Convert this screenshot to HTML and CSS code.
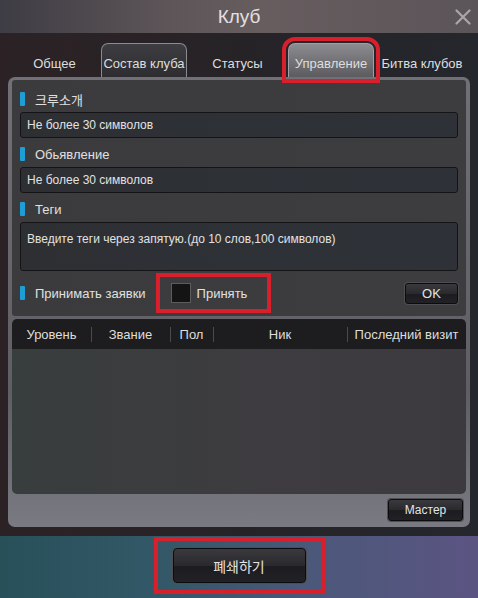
FILE: index.html
```html
<!DOCTYPE html>
<html lang="ru">
<head>
    <meta charset="UTF-8">
    <meta name="viewport" content="width=device-width, initial-scale=1.0">
    <title>Клуб</title>
    <link rel="stylesheet" href="styles.css">
</head>
<body>
    <div class="window">
        <!-- title -->
        <div class="titlebar">
            <span></span>
            <span class="title">Клуб</span>
            <span class="close">
                <svg width="16" height="16" viewBox="0 0 16 16"><path d="M1.5 1.5 L14.5 14.5 M14.5 1.5 L1.5 14.5" stroke="#a9a6aa" stroke-width="2.2" stroke-linecap="round"/></svg>
            </span>
        </div>

        <div class="content">
            <!-- tabs -->
            <div class="tabs">
                <div class="tab w1">Общее</div>
                <div class="tab w2 boxed">Состав клуба</div>
                <div class="tab w3">Статусы</div>
                <div class="tab w2 boxed active">Управление</div>
                <div class="tab w4">Битва клубов</div>
            </div>

            <div class="panel">
                <div class="settings">
                    <div class="label"><i class="bar"></i>크루소개</div>
                    <div class="field">Не более 30 символов</div>

                    <div class="label gap"><i class="bar"></i>Обьявление</div>
                    <div class="field">Не более 30 символов</div>

                    <div class="label gap"><i class="bar"></i>Теги</div>
                    <div class="field area">Введите теги через запятую.(до 10 слов,100 символов)</div>

                    <div class="accept">
                        <div class="label"><i class="bar"></i>Принимать заявки</div>
                        <div class="mark">
                            <span class="check"></span>
                            <span>Принять</span>
                        </div>
                        <button class="btn ok">OK</button>
                    </div>
                </div>

                <!-- members -->
                <div class="members">
                    <div class="head">
                        <div class="col">Уровень</div>
                        <div class="col sep">Звание</div>
                        <div class="col sep">Пол</div>
                        <div class="col sep">Ник</div>
                        <div class="col sep">Последний визит</div>
                    </div>
                    <div class="rows"></div>
                </div>

                <div class="panelfoot">
                    <button class="btn master">Мастер</button>
                </div>
            </div>
        </div>

        <div class="bottom">
            <div class="mark big">
                <button class="btn disband">폐쇄하기</button>
            </div>
        </div>
    </div>
</body>
</html>
```

FILE: styles.css
```css
*
{
    box-sizing: border-box;
}
body
{
    margin: 0;
    background: #1c1a1e;
    font-family: "Liberation Sans", "Noto Sans CJK KR", sans-serif;
    font-size: 13px;
    color: #dcdcdc;
}
.window
{
    width: 478px;
    height: 598px;
    display: flex;
    flex-direction: column;
    overflow: hidden;
}
.titlebar
{
    height: 33px;
    flex: none;
    display: grid;
    grid-template-columns: 1fr auto 1fr;
    align-items: center;
    background: linear-gradient(90deg, #3e3c44, #5d5558 35%, #675d5f 55%, #5b5458);
}
.title
{
    font-size: 19px;
    color: #e2e0e0;
}
.close
{
    justify-self: end;
    display: flex;
    padding-right: 7px;
}
.content
{
    flex: 1;
    padding: 10px 8px 9px;
    background: linear-gradient(90deg, #2c2225, #262327 50%, #24272d);
    display: flex;
    flex-direction: column;
}
.tabs
{
    display: flex;
    height: 34px;
    flex: none;
}
.tab
{
    display: flex;
    align-items: center;
    justify-content: center;
    padding-top: 6px;
    color: #dedede;
    white-space: nowrap;
}
.w1{width: 93px;}
.w2{width: 86px;}
.w3{width: 101px;}
.w4{width: 96px;}
.boxed
{
    border: 1px solid #8c8c90;
    border-bottom: none;
    border-radius: 7px 7px 0 0;
    background: linear-gradient(#3e3e42, #2d2d31);
}
.active
{
    background: linear-gradient(#8c8c90, #5c5c60);
    border-color: #a0a0a4;
    outline: 4px solid #d8202c;
    outline-offset: 2px;
    position: relative;
    z-index: 2;
}
.panel
{
    flex: 1;
    border-radius: 7px;
    padding: 3px 4px 6px;
    background: linear-gradient(#707076, #5e5e64 70%, #7a7a82);
    display: flex;
    flex-direction: column;
}
.settings
{
    background: linear-gradient(90deg, #3b3b3d, #3d3d40);
    border-radius: 3px;
    padding: 8px 8px 3px;
}
.label
{
    height: 22px;
    display: flex;
    align-items: center;
    gap: 10px;
    color: #e0e0e0;
    white-space: nowrap;
}
.label.gap
{
    margin-top: 5px;
}
.bar
{
    width: 5px;
    height: 14px;
    background: #1d9fd6;
    border-radius: 1px;
}
.field
{
    margin-top: 2px;
    height: 26px;
    padding: 0 6px;
    display: flex;
    align-items: center;
    font-size: 12px;
    color: #e2e2e2;
    background: linear-gradient(90deg, #2d2f33, #2e3238);
    border: 1px solid #141416;
    border-radius: 3px;
}
.area
{
    height: 49px;
    align-items: flex-start;
    padding-top: 9px;
}
.accept
{
    margin-top: 2px;
    height: 40px;
    display: flex;
    align-items: center;
}
.mark
{
    border: 4px solid #d8202c;
}
.accept .mark
{
    margin-left: 10px;
    width: 115px;
    height: 40px;
    display: flex;
    align-items: center;
    gap: 6px;
    padding-left: 11px;
    color: #e0e0e0;
}
.check
{
    width: 20px;
    height: 20px;
    background: #141414;
    border: 1px solid #5c5c5c;
}
.btn
{
    font-family: inherit;
    color: #e4e4e4;
    border: 1px solid #0c0c0e;
    border-radius: 3px;
    background: linear-gradient(#3a3a3e, #2a2a2e 50%, #1c1c20 51%, #222226);
    box-shadow: 0 0 0 1px #4e4e52;
    padding: 0;
    cursor: pointer;
}
.ok
{
    margin-left: auto;
    width: 53px;
    height: 21px;
    font-size: 13px;
}
.members
{
    margin-top: 3px;
    height: 175px;
    border-radius: 5px;
    overflow: hidden;
    display: flex;
    flex-direction: column;
}
.head
{
    height: 30px;
    flex: none;
    display: grid;
    grid-template-columns: 79px 79px 43px 134px 1fr;
    background: #1d1d1f;
}
.col
{
    display: flex;
    align-items: center;
    justify-content: center;
    white-space: nowrap;
    color: #dedede;
}
.sep
{
    background: linear-gradient(#4a4a4c, #4a4a4c) left center / 1px 15px no-repeat;
}
.rows
{
    flex: 1;
    background: linear-gradient(90deg, #383d3d, #3d3c3f 50%, #3d3a3f);
}
.panelfoot
{
    display: flex;
    justify-content: flex-end;
    padding: 5px 3px 0 0;
}
.master
{
    width: 75px;
    height: 22px;
    font-size: 12px;
}
.bottom
{
    height: 62px;
    flex: none;
    display: flex;
    justify-content: center;
    padding-top: 1px;
    background: linear-gradient(90deg, #275059, #345868 35%, #4b587a 65%, #5b5482);
}
.mark.big
{
    width: 172px;
    height: 57px;
    padding: 7px 15px 0;
    margin-left: 1px;
}
.disband
{
    width: 133px;
    height: 35px;
    font-size: 14px;
    border-radius: 4px;
}
```
